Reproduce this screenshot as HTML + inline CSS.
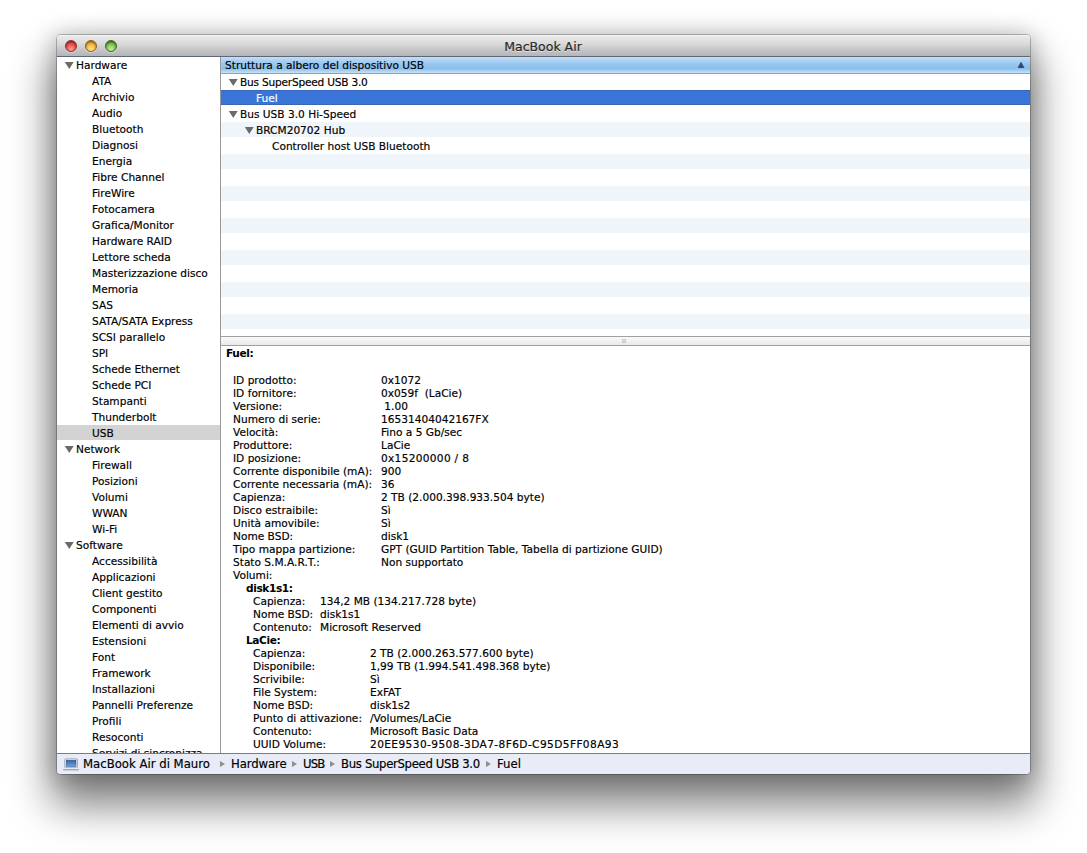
<!DOCTYPE html>
<html lang="it"><head><meta charset="utf-8"><title>MacBook Air</title>
<style>
html,body{margin:0;padding:0;background:#fff;}
body{width:1087px;height:853px;overflow:hidden;position:relative;font-family:"DejaVu Sans","Liberation Sans",sans-serif;font-size:10.6px;color:#000;-webkit-text-stroke:0.17px #000;}
#win{position:absolute;left:57px;top:35px;width:973px;height:739px;border-radius:4px 4px 4px 4px;background:#fff;
 box-shadow:0 0 0 1px rgba(0,0,0,.23),0 26px 42px 6px rgba(0,0,0,.49),0 2px 22px 2px rgba(0,0,0,.22);}
#title{position:absolute;left:0;top:0;width:100%;height:21px;border-radius:4px 4px 0 0;
 background:linear-gradient(#ebebeb 0%,#dbdbdb 40%,#c3c2c4 75%,#b4b6bb 100%);border-bottom:1px solid #5e6776;box-shadow:inset 0 1px 0 #f2f2f2;}
#title .tt{position:absolute;left:0;right:0;top:4px;text-align:center;font-size:12.5px;margin-left:-1px;color:#303030;text-shadow:0 1px 0 rgba(255,255,255,.6);line-height:16px;}
.tl{position:absolute;top:5px;width:12px;height:12px;border-radius:50%;box-sizing:border-box;}
.tl.r1{left:8px;background:radial-gradient(circle at 50% 85%,#ffa399 0%,#ee5a52 45%,#bf3a35 80%,#9a2f2b 100%);border:1px solid #8e2e2a;box-shadow:inset 0 1px 1.5px rgba(90,10,10,.6),0 1px 0 rgba(255,255,255,.4);}
.tl.y1{left:28px;background:radial-gradient(circle at 50% 85%,#ffe88e 0%,#f6c04e 45%,#d0912c 80%,#a8741f 100%);border:1px solid #8c5e1c;box-shadow:inset 0 1px 1.5px rgba(90,50,0,.6),0 1px 0 rgba(255,255,255,.4);}
.tl.g1{left:48px;background:radial-gradient(circle at 50% 85%,#c8f296 0%,#8ccc5e 45%,#5c983c 80%,#467a2e 100%);border:1px solid #3e6628;box-shadow:inset 0 1px 1.5px rgba(20,60,10,.6),0 1px 0 rgba(255,255,255,.4);}
#side{position:absolute;left:0;top:22px;width:163px;height:696px;overflow:hidden;background:#fff;border-right:1px solid #989898;}
.r{height:16px;line-height:16px;white-space:nowrap;position:relative;overflow:hidden;text-overflow:ellipsis;box-sizing:border-box;width:160px;}
.r.sel{width:163px;}
.r.g{padding-left:19px;}
.r.i{padding-left:35px;}
.r.sel{background:linear-gradient(#d3d3d3,#d3d3d3) no-repeat;background-size:100% 15px;}
.tri{position:absolute;left:7.5px;top:4.5px;width:9.5px;height:7.5px;background:#6a6a6a;clip-path:polygon(0 0,100% 0,50% 100%);}
#main{position:absolute;left:164px;top:22px;width:809px;height:696px;overflow:hidden;}
#hdr{height:16px;line-height:16px;padding-left:4px;background:linear-gradient(#c6def7 0%,#b4d5f4 15%,#9cc8f0 40%,#8bbeed 72%,#a5cff3 85%,#c8e4f9 100%);border-bottom:1px solid #8da1b7;position:relative;}
#hdr .up{position:absolute;right:5.5px;top:4.5px;width:7px;height:6.5px;background:#2e4c72;clip-path:polygon(50% 0,100% 100%,0 100%);}
.t{height:16px;line-height:16px;white-space:nowrap;position:relative;}
.t.alt{background:linear-gradient(#f0f4fb,#f0f4fb) no-repeat;background-size:100% 15px;}
.t.tsel{background:linear-gradient(#3668bd 0,#3668bd 1px,#3c73da 1px,#3577d7 14px,#3a66b2 14px,#3a66b2 15px) no-repeat;background-size:100% 15px;color:#fff;-webkit-text-stroke-color:#fff;}
#split{position:absolute;left:0;top:279px;width:100%;height:8px;background:linear-gradient(#fafafa,#e9e9e9);border-top:1px solid #a0a0a0;border-bottom:1px solid #a0a0a0;}
#split i{position:absolute;left:401px;top:2px;width:4px;height:4px;border-radius:50%;background:radial-gradient(#e2e2e2 25%,#a4a4a4 75%);border:0;}
#det{position:absolute;left:0;top:289px;width:100%;height:407px;overflow:hidden;background:#fff;}
#det .f{position:absolute;left:5px;top:1px;line-height:13px;}
#det .f,.d b{font-weight:bold;letter-spacing:-0.4px;-webkit-text-stroke:0;}
#det .ls{position:absolute;left:0;top:28px;width:100%;}
.d{height:13px;line-height:13px;position:relative;white-space:pre;}
.d .k,.d .v{position:absolute;top:0;}
#status{position:absolute;left:0;top:718px;width:100%;height:20px;border-top:1px solid #7c7c7c;border-radius:0 0 4px 4px;background:#e8ecf7;font-size:11.7px;line-height:20px;white-space:nowrap;}
#status span{position:absolute;top:0;}
#status .sep{top:7px !important;width:0;height:0;border-top:3.5px solid transparent;border-bottom:3.5px solid transparent;border-left:5px solid #8e8e8e;}
</style></head><body>
<div id="win">
 <div id="title"><span class="tl r1"></span><span class="tl y1"></span><span class="tl g1"></span><div class="tt">MacBook Air</div></div>
 <div id="side">
<div class="r g"><span class="tri"></span>Hardware</div>
<div class="r i">ATA</div>
<div class="r i">Archivio</div>
<div class="r i">Audio</div>
<div class="r i">Bluetooth</div>
<div class="r i">Diagnosi</div>
<div class="r i">Energia</div>
<div class="r i">Fibre Channel</div>
<div class="r i">FireWire</div>
<div class="r i">Fotocamera</div>
<div class="r i">Grafica/Monitor</div>
<div class="r i">Hardware RAID</div>
<div class="r i">Lettore scheda</div>
<div class="r i">Masterizzazione disco</div>
<div class="r i">Memoria</div>
<div class="r i">SAS</div>
<div class="r i">SATA/SATA Express</div>
<div class="r i">SCSI parallelo</div>
<div class="r i">SPI</div>
<div class="r i">Schede Ethernet</div>
<div class="r i">Schede PCI</div>
<div class="r i">Stampanti</div>
<div class="r i">Thunderbolt</div>
<div class="r i sel">USB</div>
<div class="r g"><span class="tri"></span>Network</div>
<div class="r i">Firewall</div>
<div class="r i">Posizioni</div>
<div class="r i">Volumi</div>
<div class="r i">WWAN</div>
<div class="r i">Wi-Fi</div>
<div class="r g"><span class="tri"></span>Software</div>
<div class="r i">Accessibilità</div>
<div class="r i">Applicazioni</div>
<div class="r i">Client gestito</div>
<div class="r i">Componenti</div>
<div class="r i">Elementi di avvio</div>
<div class="r i">Estensioni</div>
<div class="r i">Font</div>
<div class="r i">Framework</div>
<div class="r i">Installazioni</div>
<div class="r i">Pannelli Preferenze</div>
<div class="r i">Profili</div>
<div class="r i">Resoconti</div>
<div class="r i">Servizi di sincronizzazione</div>
 </div>
 <div id="main">
  <div id="hdr">Struttura a albero del dispositivo USB<span class="up"></span></div>
<div class="t" style="padding-left:19px;letter-spacing:-0.22px"><span class="tri" style="left:7.5px"></span>Bus SuperSpeed USB 3.0</div>
<div class="t alt tsel" style="padding-left:35px">Fuel</div>
<div class="t" style="padding-left:19px"><span class="tri" style="left:7.5px"></span>Bus USB 3.0 Hi-Speed</div>
<div class="t alt" style="padding-left:35px"><span class="tri" style="left:23.5px"></span>BRCM20702 Hub</div>
<div class="t" style="padding-left:51px">Controller host USB Bluetooth</div>
<div class="t alt"></div>
<div class="t"></div>
<div class="t alt"></div>
<div class="t"></div>
<div class="t alt"></div>
<div class="t"></div>
<div class="t alt"></div>
<div class="t"></div>
<div class="t alt"></div>
<div class="t"></div>
<div class="t alt"></div>
<div class="t"></div>
  <div id="split"><i></i></div>
  <div id="det"><div class="f">Fuel:</div><div class="ls">
<div class="d"><span class="k" style="left:12px">ID prodotto:</span><span class="v" style="left:160px">0x1072</span></div>
<div class="d"><span class="k" style="left:12px">ID fornitore:</span><span class="v" style="left:160px">0x059f  (LaCie)</span></div>
<div class="d"><span class="k" style="left:12px">Versione:</span><span class="v" style="left:160px"> 1.00</span></div>
<div class="d"><span class="k" style="left:12px">Numero di serie:</span><span class="v" style="left:160px">16531404042167FX</span></div>
<div class="d"><span class="k" style="left:12px">Velocità:</span><span class="v" style="left:160px">Fino a 5 Gb/sec</span></div>
<div class="d"><span class="k" style="left:12px">Produttore:</span><span class="v" style="left:160px">LaCie</span></div>
<div class="d"><span class="k" style="left:12px">ID posizione:</span><span class="v" style="left:160px;letter-spacing:0.3px">0x15200000 / 8</span></div>
<div class="d"><span class="k" style="left:12px">Corrente disponibile (mA):</span><span class="v" style="left:160px">900</span></div>
<div class="d"><span class="k" style="left:12px">Corrente necessaria (mA):</span><span class="v" style="left:160px">36</span></div>
<div class="d"><span class="k" style="left:12px">Capienza:</span><span class="v" style="left:160px">2 TB (2.000.398.933.504 byte)</span></div>
<div class="d"><span class="k" style="left:12px">Disco estraibile:</span><span class="v" style="left:160px">Sì</span></div>
<div class="d"><span class="k" style="left:12px">Unità amovibile:</span><span class="v" style="left:160px">Sì</span></div>
<div class="d"><span class="k" style="left:12px">Nome BSD:</span><span class="v" style="left:160px">disk1</span></div>
<div class="d"><span class="k" style="left:12px">Tipo mappa partizione:</span><span class="v" style="left:160px">GPT (GUID Partition Table, Tabella di partizione GUID)</span></div>
<div class="d"><span class="k" style="left:12px">Stato S.M.A.R.T.:</span><span class="v" style="left:160px">Non supportato</span></div>
<div class="d"><span class="k" style="left:12px">Volumi:</span><span class="v" style="left:160px"></span></div>
<div class="d"><b class="k" style="left:25px">disk1s1:</b></div>
<div class="d"><span class="k" style="left:32px">Capienza:</span><span class="v" style="left:99px">134,2 MB (134.217.728 byte)</span></div>
<div class="d"><span class="k" style="left:32px">Nome BSD:</span><span class="v" style="left:99px">disk1s1</span></div>
<div class="d"><span class="k" style="left:32px">Contenuto:</span><span class="v" style="left:99px">Microsoft Reserved</span></div>
<div class="d"><b class="k" style="left:25px">LaCie:</b></div>
<div class="d"><span class="k" style="left:32px">Capienza:</span><span class="v" style="left:149px">2 TB (2.000.263.577.600 byte)</span></div>
<div class="d"><span class="k" style="left:32px">Disponibile:</span><span class="v" style="left:149px">1,99 TB (1.994.541.498.368 byte)</span></div>
<div class="d"><span class="k" style="left:32px">Scrivibile:</span><span class="v" style="left:149px">Sì</span></div>
<div class="d"><span class="k" style="left:32px">File System:</span><span class="v" style="left:149px">ExFAT</span></div>
<div class="d"><span class="k" style="left:32px">Nome BSD:</span><span class="v" style="left:149px">disk1s2</span></div>
<div class="d"><span class="k" style="left:32px">Punto di attivazione:</span><span class="v" style="left:149px">/Volumes/LaCie</span></div>
<div class="d"><span class="k" style="left:32px">Contenuto:</span><span class="v" style="left:149px">Microsoft Basic Data</span></div>
<div class="d"><span class="k" style="left:32px">UUID Volume:</span><span class="v" style="left:149px;letter-spacing:0.4px">20EE9530-9508-3DA7-8F6D-C95D5FF08A93</span></div>
  </div></div>
 </div>
 <div id="status">
  <svg style="position:absolute;left:6px;top:4px" width="17" height="13" viewBox="0 0 17 13"><defs><linearGradient id="scr" x1="0" y1="0" x2="0" y2="1"><stop offset="0" stop-color="#2f62a6"/><stop offset="1" stop-color="#6ca6e2"/></linearGradient></defs><rect x="1.8" y="0.9" width="12.6" height="8.9" rx="0.8" fill="#f2f4fa" stroke="#8a90a0" stroke-width="0.8"/><rect x="3.2" y="2.2" width="9.8" height="6.4" fill="url(#scr)" stroke="#2a4f86" stroke-width="0.5"/><path d="M1.6 10.3 H14.6 L16 11.6 H0.2 Z" fill="#eceef4"/><path d="M0.2 11.8 H16" stroke="#70747e" stroke-width="0.8"/></svg>
  <span style="left:26px">MacBook Air di Mauro</span><span class="sep" style="left:163px"></span>
  <span style="left:174px;letter-spacing:-0.1px">Hardware</span><span class="sep" style="left:235px"></span>
  <span style="left:246px;letter-spacing:-0.8px">USB</span><span class="sep" style="left:273px"></span>
  <span style="left:284px;letter-spacing:-0.33px">Bus SuperSpeed USB 3.0</span><span class="sep" style="left:428.5px"></span>
  <span style="left:440px">Fuel</span>
 </div>
</div>
</body></html>
